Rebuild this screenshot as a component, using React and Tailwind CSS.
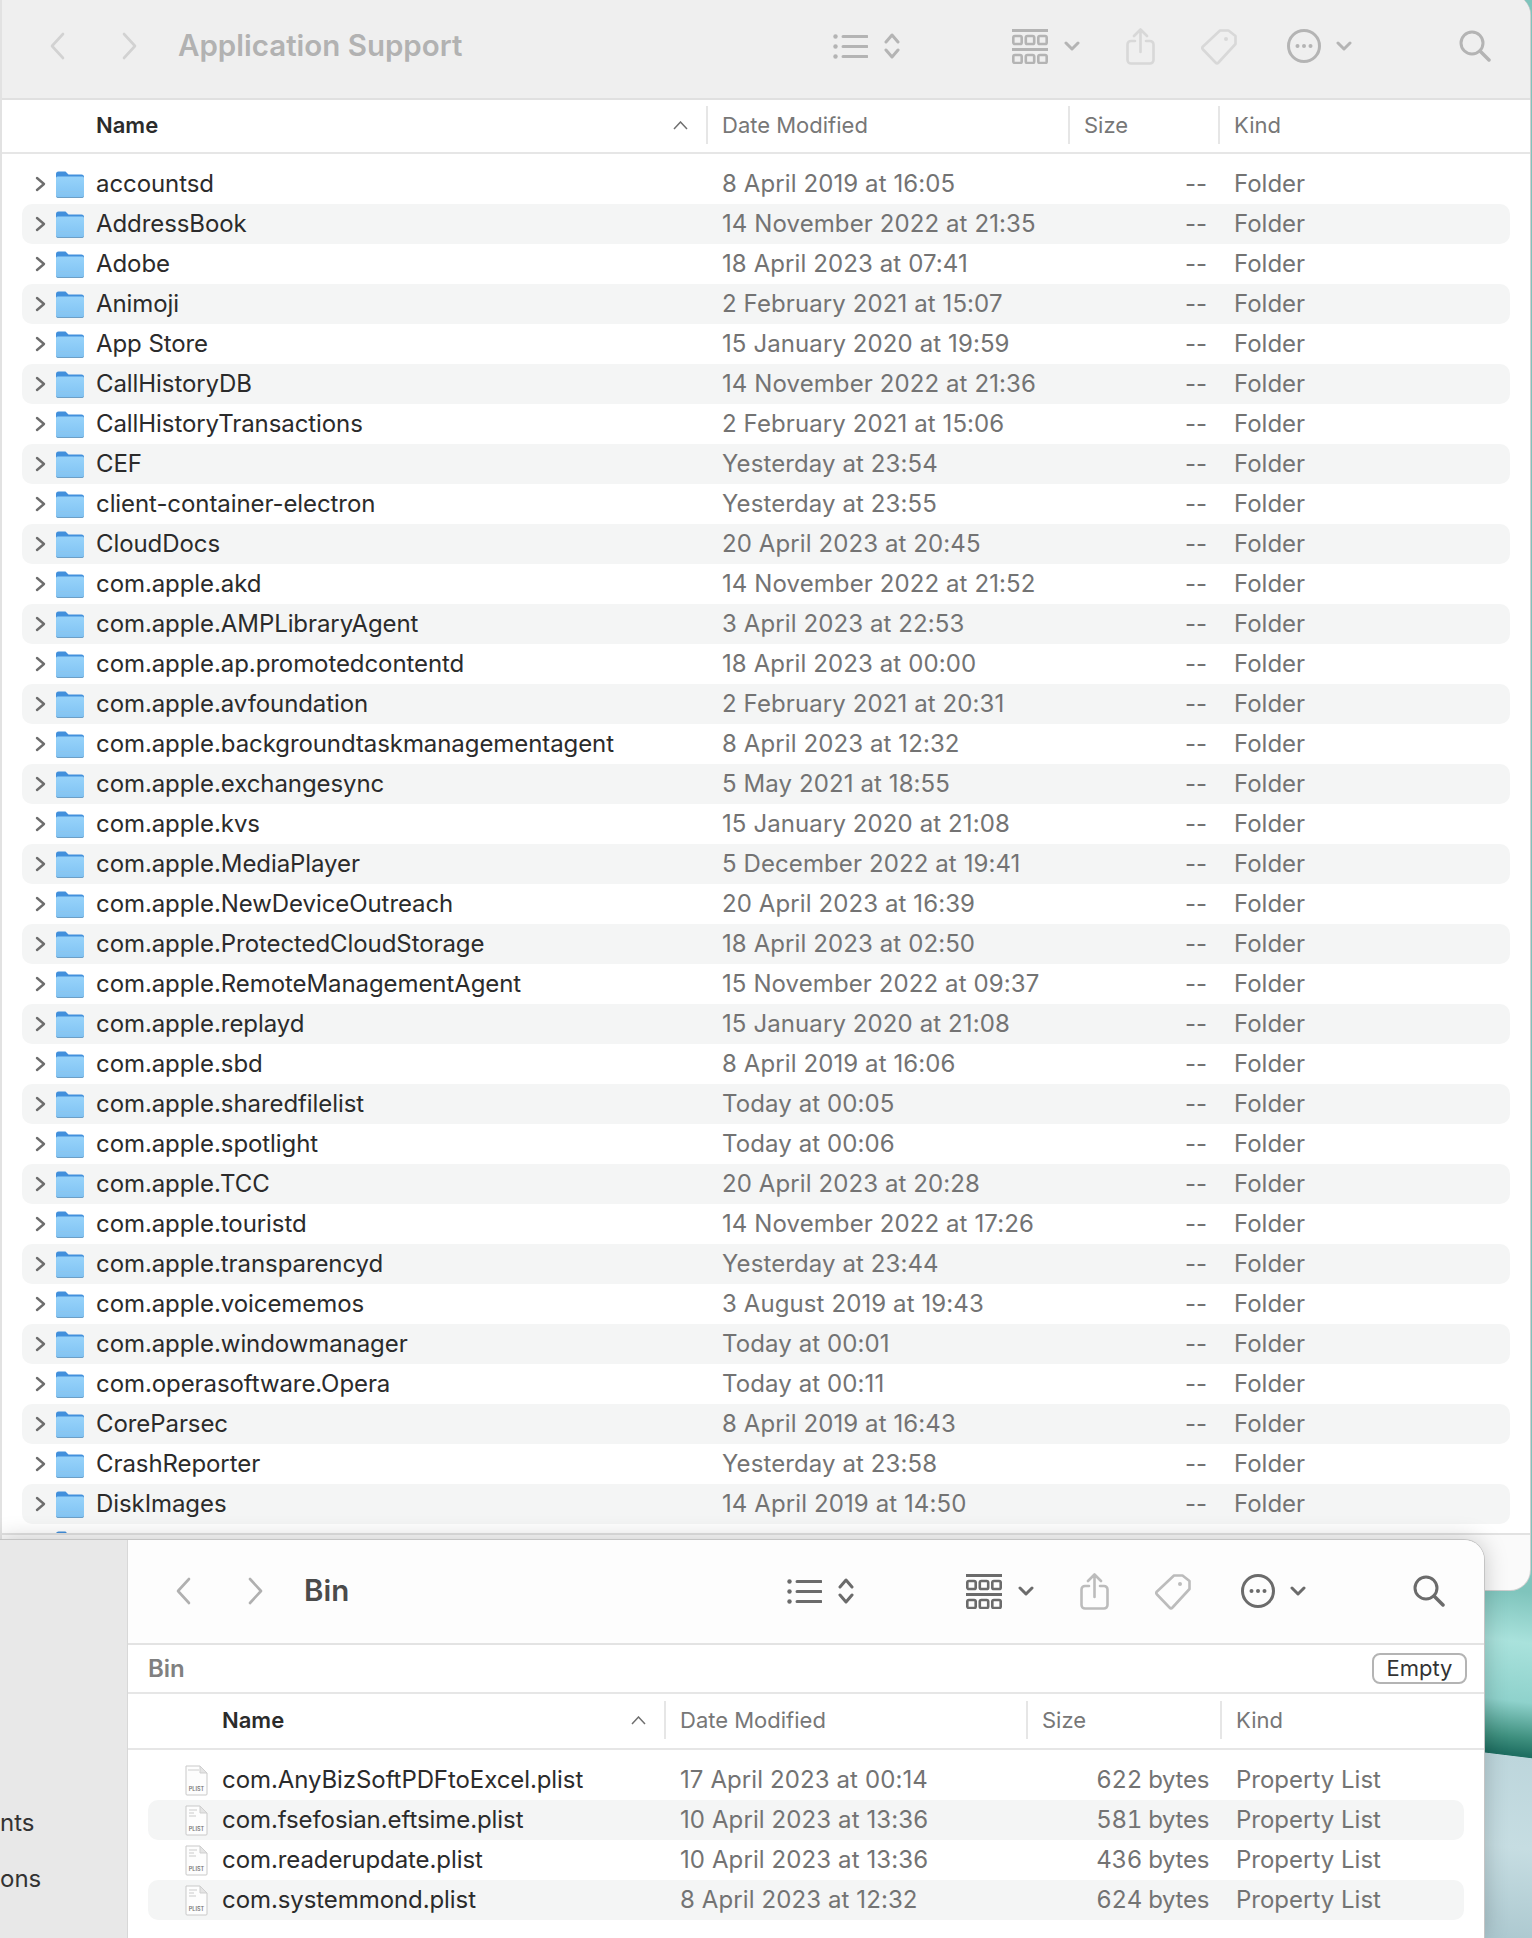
import React from "react";

const folders = [
  ["accountsd", "8 April 2019 at 16:05"],
  ["AddressBook", "14 November 2022 at 21:35"],
  ["Adobe", "18 April 2023 at 07:41"],
  ["Animoji", "2 February 2021 at 15:07"],
  ["App Store", "15 January 2020 at 19:59"],
  ["CallHistoryDB", "14 November 2022 at 21:36"],
  ["CallHistoryTransactions", "2 February 2021 at 15:06"],
  ["CEF", "Yesterday at 23:54"],
  ["client-container-electron", "Yesterday at 23:55"],
  ["CloudDocs", "20 April 2023 at 20:45"],
  ["com.apple.akd", "14 November 2022 at 21:52"],
  ["com.apple.AMPLibraryAgent", "3 April 2023 at 22:53"],
  ["com.apple.ap.promotedcontentd", "18 April 2023 at 00:00"],
  ["com.apple.avfoundation", "2 February 2021 at 20:31"],
  ["com.apple.backgroundtaskmanagementagent", "8 April 2023 at 12:32"],
  ["com.apple.exchangesync", "5 May 2021 at 18:55"],
  ["com.apple.kvs", "15 January 2020 at 21:08"],
  ["com.apple.MediaPlayer", "5 December 2022 at 19:41"],
  ["com.apple.NewDeviceOutreach", "20 April 2023 at 16:39"],
  ["com.apple.ProtectedCloudStorage", "18 April 2023 at 02:50"],
  ["com.apple.RemoteManagementAgent", "15 November 2022 at 09:37"],
  ["com.apple.replayd", "15 January 2020 at 21:08"],
  ["com.apple.sbd", "8 April 2019 at 16:06"],
  ["com.apple.sharedfilelist", "Today at 00:05"],
  ["com.apple.spotlight", "Today at 00:06"],
  ["com.apple.TCC", "20 April 2023 at 20:28"],
  ["com.apple.touristd", "14 November 2022 at 17:26"],
  ["com.apple.transparencyd", "Yesterday at 23:44"],
  ["com.apple.voicememos", "3 August 2019 at 19:43"],
  ["com.apple.windowmanager", "Today at 00:01"],
  ["com.operasoftware.Opera", "Today at 00:11"],
  ["CoreParsec", "8 April 2019 at 16:43"],
  ["CrashReporter", "Yesterday at 23:58"],
  ["DiskImages", "14 April 2019 at 14:50"],
];

const binFiles = [
  ["com.AnyBizSoftPDFtoExcel.plist", "17 April 2023 at 00:14", "622 bytes"],
  ["com.fsefosian.eftsime.plist", "10 April 2023 at 13:36", "581 bytes"],
  ["com.readerupdate.plist", "10 April 2023 at 13:36", "436 bytes"],
  ["com.systemmond.plist", "8 April 2023 at 12:32", "624 bytes"],
];

const fontStack = "font-['Inter','Noto_Sans',sans-serif]";

function FolderIcon() {
  return (
    <svg width="28" height="27" viewBox="0 0 28 27" className="shrink-0">
      <defs>
        <linearGradient id="folderBody" x1="0" y1="0" x2="0" y2="1">
          <stop offset="0" stopColor="#97d3fa" />
          <stop offset="1" stopColor="#7fc2f3" />
        </linearGradient>
      </defs>
      <path d="M0 3a2.500 2.500 0 0 1 2.500-2.500h7l3 3h13a2.500 2.500 0 0 1 2.500 2.500v4H0z" fill="#4290dc" />
      <path d="M0 7a1.500 1.500 0 0 1 1.500-1.500h25A1.500 1.500 0 0 1 28 7v18a2 2 0 0 1-2 2H2a2 2 0 0 1-2-2z" fill="url(#folderBody)" />
      <path d="M0 20.500h28M0 23h28" stroke="#8cc6ee" strokeWidth="1" />
      <path d="M0.500 25.500a1.500 1.500 0 0 0 1.500 1h24a1.500 1.500 0 0 0 1.500-1" stroke="#6d9fc6" strokeWidth="1" fill="none" />
    </svg>
  );
}

function PlistIcon({ marked }) {
  return (
    <svg width="23" height="31" viewBox="0 0 23 31" className="shrink-0">
      <path d="M1 1h14l7 7v21a1 1 0 0 1-1 1H2a1 1 0 0 1-1-1z" fill="#fdfdfd" stroke="#c9c9c9" />
      <path d="M15 1v7h7z" fill="#e4e4e4" stroke="#cfcfcf" strokeLinejoin="round" />
      {marked ? (
        <path d="M4 5h8M4 8h5M4 11h7" stroke="#dcdcdc" strokeWidth="1.500" />
      ) : (
        <path d="M3 5h11" stroke="#dcdcdc" strokeWidth="1.500" />
      )}
      <text x="11.500" y="26" textAnchor="middle" fontSize="5.500" fill="#777" fontFamily="Inter, sans-serif" fontWeight="600">
        PLIST
      </text>
    </svg>
  );
}

function RowChevron() {
  return (
    <svg width="11" height="16" viewBox="0 0 11 16" className="shrink-0">
      <path d="M2 2l7 6-7 6" fill="none" stroke="#6e6e6e" strokeWidth="2.400" strokeLinecap="round" strokeLinejoin="round" />
    </svg>
  );
}

function SortChevron() {
  return (
    <svg width="15" height="9" viewBox="0 0 15 9" className="shrink-0">
      <path d="M1 8l6.500-7L14 8" fill="none" stroke="#6f6f6f" strokeWidth="1.500" />
    </svg>
  );
}

function SmallChevron() {
  return (
    <svg width="16" height="10" viewBox="0 0 16 10" className="shrink-0">
      <path d="M2 2l6 6 6-6" fill="none" stroke="currentColor" strokeWidth="3" strokeLinecap="round" strokeLinejoin="round" />
    </svg>
  );
}

function Toolbar({ title, active }) {
  const iconColor = active ? "text-[#6b6b6b]" : "text-[#b4b4b4]";
  const dimColor = active ? "text-[#bcbcbc]" : "text-[#d8d8d8]";
  const navColor = active ? "text-[#b0b0b0]" : "text-[#d2d2d2]";
  return (
    <div className={`flex h-[105px] shrink-0 items-center border-b-2 pb-px pl-[47px] pr-[39px] ${active ? "border-[#e3e3e3] bg-[#fdfdfd]" : "border-[#e0e0e0] bg-[#efefef]"}`}>
      <svg width="16" height="28" viewBox="0 0 16 28" className={navColor}>
        <path d="M14 2L3 14l11 12" fill="none" stroke="currentColor" strokeWidth="2.600" strokeLinecap="round" strokeLinejoin="round" />
      </svg>
      <svg width="16" height="28" viewBox="0 0 16 28" className={`ml-[57px] ${navColor}`}>
        <path d="M2 2l11 12L2 26" fill="none" stroke="currentColor" strokeWidth="2.600" strokeLinecap="round" strokeLinejoin="round" />
      </svg>
      <span className={`ml-10 text-[29.5px] font-semibold leading-none ${active ? "text-[#4b4b4b]" : "text-[#b2b2b2]"}`}>{title}</span>
      <div className="flex-1" />
      <div className={`flex items-center ${iconColor}`}>
        <svg width="35" height="25" viewBox="0 0 35 25">
          <g fill="currentColor">
            <circle cx="2.500" cy="2.500" r="2.200" />
            <circle cx="2.500" cy="12.500" r="2.200" />
            <circle cx="2.500" cy="22.500" r="2.200" />
          </g>
          <path d="M10 2.500h24M10 12.500h24M10 22.500h24" stroke="currentColor" strokeWidth="3" strokeLinecap="round" />
        </svg>
        <svg width="16" height="26" viewBox="0 0 16 26" className="ml-4">
          <path d="M2 9l6-7 6 7M2 17l6 7 6-7" fill="none" stroke="currentColor" strokeWidth="3" strokeLinecap="round" strokeLinejoin="round" />
        </svg>
        <svg width="36" height="35" viewBox="0 0 36 35" className="ml-[112px]">
          <path d="M0 1.500h36M0 20.500h36" stroke="currentColor" strokeWidth="3" />
          <g fill="none" stroke="currentColor" strokeWidth="2.600">
            <rect x="1.300" y="7" width="8.400" height="8" rx="1.600" />
            <rect x="13.800" y="7" width="8.400" height="8" rx="1.600" />
            <rect x="26.300" y="7" width="8.400" height="8" rx="1.600" />
            <rect x="1.300" y="26" width="8.400" height="8" rx="1.600" />
            <rect x="13.800" y="26" width="8.400" height="8" rx="1.600" />
            <rect x="26.300" y="26" width="8.400" height="8" rx="1.600" />
          </g>
        </svg>
        <div className="ml-4"><SmallChevron /></div>
        <svg width="29" height="37" viewBox="0 0 29 37" className={`ml-[46px] ${dimColor}`}>
          <path
            d="M9 13H5a3.500 3.500 0 0 0-3.500 3.500V32A3.500 3.500 0 0 0 5 35.500h19a3.500 3.500 0 0 0 3.500-3.500V16.500A3.500 3.500 0 0 0 24 13h-4M14.500 24V2M8 8l6.500-6.500L21 8"
            fill="none"
            stroke="currentColor"
            strokeWidth="2.600"
            strokeLinecap="round"
            strokeLinejoin="round"
          />
        </svg>
        <svg width="36" height="37" viewBox="0 0 36 37" className={`ml-[46px] ${dimColor}`}>
          <path
            d="M19 2.500h8.500L34.500 8v8L17.500 34.500q-1.500 1.500-3 0L2 21.500q-1.500-1.500 0-3z"
            fill="none"
            stroke="currentColor"
            strokeWidth="2.600"
            strokeLinejoin="round"
          />
          <circle cx="25" cy="11" r="2" fill="currentColor" />
        </svg>
        <svg width="34" height="34" viewBox="0 0 34 34" className="ml-[50px]">
          <circle cx="17" cy="17" r="15.500" fill="none" stroke="currentColor" strokeWidth="3" />
          <g fill="currentColor">
            <circle cx="10.500" cy="17" r="2" />
            <circle cx="17" cy="17" r="2" />
            <circle cx="23.500" cy="17" r="2" />
          </g>
        </svg>
        <div className="ml-[15px]"><SmallChevron /></div>
        <svg width="32" height="32" viewBox="0 0 32 32" className="ml-[107px]">
          <circle cx="13" cy="13" r="11" fill="none" stroke="currentColor" strokeWidth="3" />
          <path d="M21 21l9 9" stroke="currentColor" strokeWidth="3.500" strokeLinecap="round" />
        </svg>
      </div>
    </div>
  );
}

function Separator() {
  return <div className="h-[38px] w-0.5 shrink-0 bg-[#e6e6e6]" />;
}

function FolderRow({ name, date, striped }) {
  return (
    <div className={`mx-5 flex h-10 items-center rounded-[10px] text-[24px] ${striped ? "bg-[#f4f5f5]" : ""}`}>
      <div className="ml-[13px] mr-[10px]"><RowChevron /></div>
      <FolderIcon />
      <span className="ml-3 w-[626px] truncate tracking-[-0.08px] text-[#2b2b2b]">{name}</span>
      <span className="w-[350px] tracking-[0.1px] text-[#737373]">{date}</span>
      <span className="w-[135px] text-right text-[#737373]">--</span>
      <span className="ml-[27px] text-[#737373]">Folder</span>
    </div>
  );
}

function BinRow({ name, date, size, striped, marked }) {
  return (
    <div className={`mx-5 flex h-10 items-center rounded-[10px] text-[24px] ${striped ? "bg-[#f4f5f5]" : ""}`}>
      <div className="ml-[37px]"><PlistIcon marked={marked} /></div>
      <span className="ml-3.5 w-[458px] truncate tracking-[-0.08px] text-[#2b2b2b]">{name}</span>
      <span className="w-[390px] tracking-[0.1px] text-[#737373]">{date}</span>
      <span className="w-[139px] text-right tabular-nums tracking-[-0.3px] text-[#737373]">{size}</span>
      <span className="ml-[27px] text-[#737373]">Property List</span>
    </div>
  );
}

export default function App() {
  return (
    <div className={`relative h-[1938px] w-[1532px] overflow-hidden bg-[linear-gradient(187deg,#7fc4bc_0%,#7fc4bc_74.9%,#a9e2dc_77.3%,#8fd2cc_80.1%,#3f907f_81.8%,#1f6f62_82.6%,#1f6f62_82.68%,#bdd6dc_82.72%,#c6dde2_87%,#adc9d0_91.3%)] ${fontStack}`}>
      {/* ===== BACK WINDOW ===== */}
      <div className="absolute left-0 top-[-5px] flex h-[1595px] w-[1530px] flex-col overflow-hidden rounded-r-[20px] border-l-2 border-[#e2e2e2] bg-[#fafafa] shadow-[0_0_0_1px_#cfcfcf]">
        <Toolbar title="Application Support" />
        {/* HEADER */}
        <div className="flex h-[54px] shrink-0 items-center border-b-2 border-[#e6e6e6] bg-white pb-0.5 text-[22px] text-[#777]">
          <div className="flex w-[704px] items-center justify-between pl-[94px] pr-[18px]">
            <span className="font-semibold text-[#2b2b2b]">Name</span>
            <SortChevron />
          </div>
          <Separator />
          <span className="w-[360px] pl-[14px]">Date Modified</span>
          <Separator />
          <span className="w-[148px] pl-[14px]">Size</span>
          <Separator />
          <span className="pl-[14px]">Kind</span>
        </div>
        {/* LIST */}
        <div className="h-[1379px] shrink-0 overflow-hidden bg-white pt-2.5">
          {folders.map((f, i) => (
            <FolderRow key={f[0]} name={f[0]} date={f[1]} striped={i % 2 === 1} />
          ))}
          <div className="mx-5 flex h-10 items-center">
            <div className="ml-[34px]"><FolderIcon /></div>
          </div>
        </div>
        <div className="flex-1 border-t-2 border-[#e2e2e2]" />
      </div>

      {/* ===== FRONT WINDOW ===== */}
      <div className="absolute left-0 top-[1540px] flex h-[398px] w-[1484px] overflow-hidden rounded-tr-[20px] bg-white shadow-[0_0_0_1px_#c4c4c4,0_0_24px_rgba(0,0,0,0.22)]">
        {/* SIDEBAR */}
        <div className="flex w-[128px] shrink-0 flex-col gap-[26px] border-r border-[#d8d8d8] bg-[#e8e8e8] pt-[268px] text-[24px] leading-[30px] text-[#333]">
          <span>nts</span>
          <span>ons</span>
        </div>
        <div className="flex min-w-0 flex-1 flex-col">
          <Toolbar title="Bin" active />
          {/* BIN BAR */}
          <div className="flex h-[49px] shrink-0 items-center justify-between border-b-2 border-[#e6e6e6] pl-5 pr-[17px]">
            <span className="text-[24px] font-semibold text-[#808080]">Bin</span>
            <button className="flex h-[31px] w-[95px] items-center justify-center rounded-lg border-2 border-[#b4b4b4] text-[22px] text-[#333]">
              Empty
            </button>
          </div>
          {/* HEADER */}
          <div className="flex h-14 shrink-0 items-center border-b-2 border-[#e6e6e6] pb-0.5 text-[22px] text-[#777]">
            <div className="flex w-[536px] items-center justify-between pl-[94px] pr-[18px]">
              <span className="font-semibold text-[#2b2b2b]">Name</span>
              <SortChevron />
            </div>
            <Separator />
            <span className="w-[360px] pl-[14px]">Date Modified</span>
            <Separator />
            <span className="w-[192px] pl-[14px]">Size</span>
            <Separator />
            <span className="pl-[14px]">Kind</span>
          </div>
          {/* LIST */}
          <div className="pt-2.5">
            {binFiles.map((f, i) => (
              <BinRow key={f[0]} name={f[0]} date={f[1]} size={f[2]} striped={i % 2 === 1} marked={i > 0} />
            ))}
          </div>
        </div>
      </div>
    </div>
  );
}
